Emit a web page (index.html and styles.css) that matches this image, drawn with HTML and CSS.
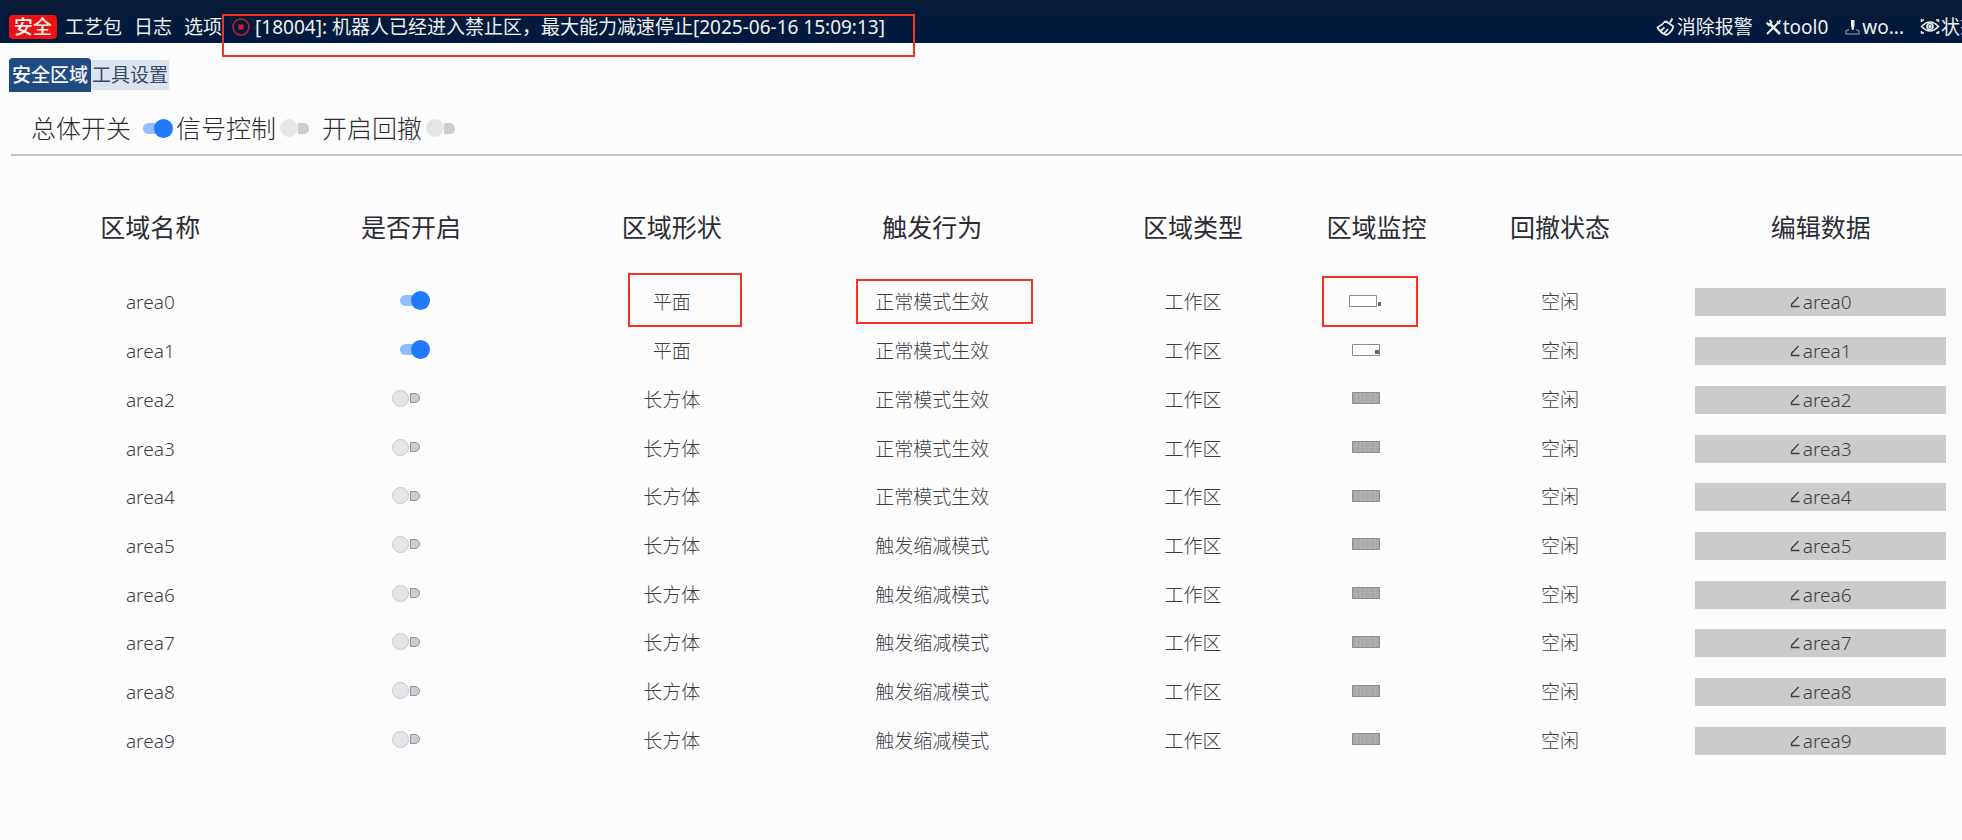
FILE: index.html
```html
<!DOCTYPE html>
<html lang="zh-CN">
<head>
<meta charset="utf-8">
<meta name="viewport" content="width=device-width, initial-scale=1">
<title>安全区域</title>
<link rel="stylesheet" href="styles.css">
</head>
<body>
<svg class="defs" aria-hidden="true">
  <symbol id="pen" viewBox="0 0 10 12"><path d="M8.5 1 1.5 8.5v2h8M1.5 8.5 3 6.5" fill="none" stroke="currentColor" stroke-width="1.3"/></symbol>
  <symbol id="mon-full" viewBox="0 0 28 12"><path d="M.5.5h27v11H.5z" fill="#a9a9a9" stroke="#8d8d8d"/><path d="M4.5 1v10M8.5 1v10M12.5 1v10M17.5 1v10M23.5 1v10" stroke="#b3b3b3"/></symbol>
</svg>

<header class="topbar">
  <nav class="menu">
    <a class="menu-item active" href="#">安全</a>
    <a class="menu-item" href="#">工艺包</a>
    <a class="menu-item" href="#">日志</a>
    <a class="menu-item" href="#">选项</a>
  </nav>
  <div class="alarm">
    <svg class="alarm-icon" viewBox="0 0 18 18" aria-hidden="true"><circle cx="9" cy="9" r="8" fill="none" stroke="#c4202a" stroke-width="1.5"/><path d="M6.5 6.5h5v5h-5z" fill="#d81e28"/></svg>
    <span>[18004]: 机器人已经进入禁止区，最大能力减速停止[2025-06-16 15:09:13]</span>
    <i class="mark mark-alarm"></i>
  </div>
  <div class="tools">
    <button class="tool"><svg class="i20" viewBox="0 0 20 20" fill="none" stroke="currentColor" stroke-width="1.8" aria-hidden="true"><path d="M16.5 1.500 14 5.500M9.500 4l8 5.500M9.500 4Q6 8 1.500 10.500 4 15.500 10.500 18q5-2.500 7-8.500M5 13.500l3.500-3M8.500 16l3.500-4"/></svg>消除报警</button>
    <button class="tool"><svg class="i17" viewBox="0 0 17 17" fill="none" stroke="currentColor" aria-hidden="true"><path d="M15.500 1.500 9 8M8 9l-6 6" stroke-width="2"/><path d="m5 5 10 10" stroke-width="2.600"/><path d="M1.500 3.500 4 6l2.500-2.500L4.500 1" stroke-width="2"/><path d="m12 2 3 3" stroke-width="1.500"/></svg>tool0</button>
    <button class="tool tool-user"><svg class="i17" viewBox="0 0 17 17" aria-hidden="true"><path d="M7 1h3.500v5L9.500 11h-1.500L7 6z" fill="currentColor"/><path d="M5 10.500 2 12v3h13v-3l-3-1.500" fill="none" stroke="#6f7a8e" stroke-width="1.500"/></svg>wo...</button>
    <button class="tool"><svg class="i20" viewBox="0 0 20 20" fill="none" stroke="currentColor" stroke-width="1.600" aria-hidden="true"><path d="M1.500 9.500Q10 .5 18.500 9.500 10 18.500 1.500 9.500z"/><circle cx="10" cy="9.500" r="3"/><circle cx="10" cy="9.500" r="1" fill="currentColor"/><path d="M1.500 5V3H4M16 3h2.500v2M1.500 14v2H4M16 16h2.500v-2"/></svg>状态</button>
  </div>
</header>

<main>
  <div class="tabs" role="tablist">
    <button class="tab selected" role="tab" aria-selected="true">安全区域</button>
    <button class="tab" role="tab" aria-selected="false">工具设置</button>
  </div>

  <div class="switches">
    <label class="switch-label master">总体开关<input class="switch" type="checkbox" checked></label>
    <label class="switch-label signal">信号控制<input class="switch" type="checkbox"></label>
    <label class="switch-label">开启回撤<input class="switch" type="checkbox"></label>
  </div>

  <div class="table-wrap">
  <table class="areas">
    <colgroup><col class="wide"><col class="wide"><col class="wide"><col class="wide"><col class="wide"><col><col class="wide"><col class="wide"></colgroup>
    <thead>
      <tr><th>区域名称</th><th>是否开启</th><th>区域形状</th><th>触发行为</th><th>区域类型</th><th>区域监控</th><th>回撤状态</th><th>编辑数据</th></tr>
    </thead>
    <tbody>
      <tr><td>area0</td><td><input class="switch" type="checkbox" aria-label="area0" checked></td><td>平面<i class="mark mark-shape"></i></td><td>正常模式生效<i class="mark mark-action"></i></td><td>工作区</td><td class="mon"><svg viewBox="0 0 34 12"><path d="M.5.5h27v11H.5z" fill="#fff" stroke="#8f8a8c"/><path d="M29 7h3v4h-3z" fill="#666"/></svg><i class="mark mark-monitor"></i></td><td>空闲</td><td><button class="edit"><svg viewBox="0 0 10 12"><use href="#pen"/></svg>area0</button></td></tr>
      <tr><td>area1</td><td><input class="switch" type="checkbox" aria-label="area1" checked></td><td>平面</td><td>正常模式生效</td><td>工作区</td><td class="mon"><svg class="narrow" viewBox="0 0 28 12"><path d="M.5.5h27v11H.5z" fill="#fff" stroke="#8f8a8c"/><path d="M23 6h4v4h-4z" fill="#666"/></svg></td><td>空闲</td><td><button class="edit"><svg viewBox="0 0 10 12"><use href="#pen"/></svg>area1</button></td></tr>
      <tr><td>area2</td><td><input class="switch" type="checkbox" aria-label="area2"></td><td>长方体</td><td>正常模式生效</td><td>工作区</td><td class="mon"><svg class="narrow"><use href="#mon-full"/></svg></td><td>空闲</td><td><button class="edit"><svg><use href="#pen"/></svg>area2</button></td></tr>
      <tr><td>area3</td><td><input class="switch" type="checkbox" aria-label="area3"></td><td>长方体</td><td>正常模式生效</td><td>工作区</td><td class="mon"><svg class="narrow"><use href="#mon-full"/></svg></td><td>空闲</td><td><button class="edit"><svg><use href="#pen"/></svg>area3</button></td></tr>
      <tr><td>area4</td><td><input class="switch" type="checkbox" aria-label="area4"></td><td>长方体</td><td>正常模式生效</td><td>工作区</td><td class="mon"><svg class="narrow"><use href="#mon-full"/></svg></td><td>空闲</td><td><button class="edit"><svg><use href="#pen"/></svg>area4</button></td></tr>
      <tr><td>area5</td><td><input class="switch" type="checkbox" aria-label="area5"></td><td>长方体</td><td>触发缩减模式</td><td>工作区</td><td class="mon"><svg class="narrow"><use href="#mon-full"/></svg></td><td>空闲</td><td><button class="edit"><svg><use href="#pen"/></svg>area5</button></td></tr>
      <tr><td>area6</td><td><input class="switch" type="checkbox" aria-label="area6"></td><td>长方体</td><td>触发缩减模式</td><td>工作区</td><td class="mon"><svg class="narrow"><use href="#mon-full"/></svg></td><td>空闲</td><td><button class="edit"><svg><use href="#pen"/></svg>area6</button></td></tr>
      <tr><td>area7</td><td><input class="switch" type="checkbox" aria-label="area7"></td><td>长方体</td><td>触发缩减模式</td><td>工作区</td><td class="mon"><svg class="narrow"><use href="#mon-full"/></svg></td><td>空闲</td><td><button class="edit"><svg><use href="#pen"/></svg>area7</button></td></tr>
      <tr><td>area8</td><td><input class="switch" type="checkbox" aria-label="area8"></td><td>长方体</td><td>触发缩减模式</td><td>工作区</td><td class="mon"><svg class="narrow"><use href="#mon-full"/></svg></td><td>空闲</td><td><button class="edit"><svg><use href="#pen"/></svg>area8</button></td></tr>
      <tr><td>area9</td><td><input class="switch" type="checkbox" aria-label="area9"></td><td>长方体</td><td>触发缩减模式</td><td>工作区</td><td class="mon"><svg class="narrow"><use href="#mon-full"/></svg></td><td>空闲</td><td><button class="edit"><svg><use href="#pen"/></svg>area9</button></td></tr>
    </tbody>
  </table>
  </div>
</main>
</body>
</html>
```

FILE: styles.css
```css
*,
*::before,
*::after {
  box-sizing: border-box;
}

body {
  margin: 0;
  background: #fcfcfc;
  color: #2b2d33;
  font-family: "Noto Sans", "Noto Sans CJK SC", sans-serif;
  font-size: 19px;
  line-height: 24px;
  overflow-x: hidden;
}

button {
  border: 0;
  background: none;
  padding: 0;
  color: inherit;
  font: inherit;
}

.defs {
  display: none;
}

/* Top bar */
.topbar {
  display: flex;
  align-items: flex-end;
  padding: 15px 0 4px 9px;
  background: linear-gradient(#0a1a33, #001a43);
  color: #eef0ee;
  white-space: nowrap;
}

.menu {
  display: flex;
  gap: 12px;
}

.menu-item {
  color: inherit;
  text-decoration: none;
}

.menu-item.active {
  margin-right: -4px;
  padding: 0 5px;
  border-radius: 4px;
  background: #ee1111;
  font-weight: 500;
}

.alarm {
  position: relative;
  display: flex;
  align-items: center;
  gap: 5px;
  margin-left: 10px;
}

.alarm-icon {
  width: 18px;
  height: 18px;
}

.tools {
  display: flex;
  gap: 12px;
  margin-left: auto;
  margin-right: -17px;
}

.tool {
  display: flex;
  align-items: center;
  gap: 1px;
}

.tool-user {
  margin: 0 4px;
}

.i20 {
  width: 20px;
  height: 20px;
}

.i17 {
  width: 17px;
  height: 17px;
}

/* Tabs */
.tabs {
  display: flex;
  align-items: center;
  padding: 15px 8px 0 9px;
}

.tab {
  padding: 3px 1px;
  background: #dbe3ef;
  color: #3c4a66;
}

.tab.selected {
  padding: 5px 3px;
  border-radius: 4px 4px 0 0;
  background: #1f4b80;
  color: #f4f7fa;
  font-weight: 500;
}

/* Global switches */
.switches {
  display: flex;
  gap: 12px;
  margin-left: 11px;
  padding: 21px 20px 11px;
  border-bottom: 2px solid #c4c7c6;
}

.switch-label {
  display: flex;
  align-items: center;
  gap: 4px;
  font-size: 25px;
  font-weight: 300;
  line-height: 30px;
}

.switch-label.master {
  gap: 12px;
  margin-right: -9px;
}

.switch {
  appearance: none;
  display: inline-flex;
  align-items: center;
  width: 30px;
  height: 20px;
  margin: 0;
  vertical-align: middle;
}

.switch::before {
  content: "";
  flex: none;
  width: 18px;
  height: 18px;
  border-radius: 50%;
  background: #e3e5e6;
}

.switch::after {
  content: "";
  flex: none;
  width: 11px;
  height: 11px;
  border-radius: 0 5px 5px 0;
  background: #c9ced6;
}

.switch:checked::before {
  order: 2;
  width: 19px;
  height: 19px;
  background: #1f7aff;
}

.switch:checked::after {
  width: 15px;
  margin-right: -4px;
  border-radius: 6px 0 0 6px;
  background: #92bdff;
}

/* Area table */
.table-wrap {
  padding: 32px 11px 0 20px;
}

.areas {
  width: 100%;
  table-layout: fixed;
  border-collapse: collapse;
}

.wide {
  width: 13.5%;
}

.areas th,
.areas td {
  position: relative;
  padding: 0;
  text-align: center;
  font-weight: 300;
  white-space: nowrap;
}

.areas th {
  padding-bottom: 12px;
  height: 90px;
  font-size: 25px;
  font-weight: 400;
}

.areas td {
  height: 5.8vh;
  color: #3c3e46;
}

.areas .switch {
  display: flex;
  margin: 0 auto 3px;
}

.areas .switch:not(:checked) {
  translate: -4px;
}

.areas .switch:checked {
  translate: 4px;
}

.areas .switch:not(:checked)::before {
  width: 17px;
  height: 17px;
  border: 1px solid #c6c8ca;
}

.areas .switch:not(:checked)::after {
  width: 10px;
  height: 10px;
  margin-left: 1px;
  border: 1px solid #8d929c;
}

.mon svg {
  display: block;
  width: 34px;
  height: 12px;
  margin: 0 auto 3px;
  translate: -11px;
}

.areas .mon .narrow {
  width: 28px;
}

.edit {
  display: flex;
  align-items: center;
  justify-content: center;
  gap: 3px;
  width: calc(100% - 10px);
  height: 28px;
  margin: 0 auto;
  background: #cbcbcb;
  font-weight: 300;
}

.edit svg {
  width: 10px;
  height: 12px;
}

/* Red callout frames laid over the content they point at */
.mark {
  position: absolute;
  border: 2px solid #f8301f;
  pointer-events: none;
}

.mark-alarm {
  inset: -1px -30px -18px -10px;
}

.mark-shape {
  inset: -5px 60px 0 87px;
}

.mark-action {
  inset: 1px 30px 3px 54px;
}

.mark-monitor {
  inset: -2px 12px 0 -1px;
}
```
